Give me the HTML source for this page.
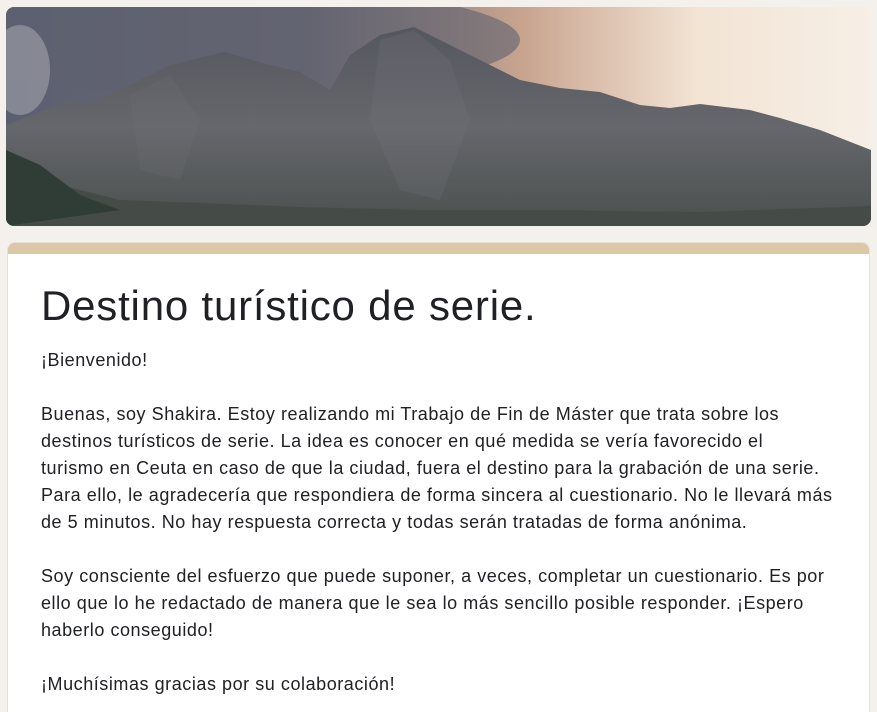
<!DOCTYPE html>
<html><head><meta charset="utf-8"><style>
html,body{margin:0;padding:0;background:#f4f1ec;width:877px;height:712px;overflow:hidden;font-family:"Liberation Sans",Arial,sans-serif;}
.banner{position:absolute;left:6px;top:7px;width:865px;height:219px;border-radius:8px;overflow:hidden;}
.card{position:absolute;left:7px;top:242px;width:863px;height:470px;background:#fff;border-radius:8px 8px 0 0;overflow:hidden;border:1px solid #e6e1d8;border-bottom:none;box-sizing:border-box;}
.bar{height:11px;background:#dcc7a6;}
h1{position:absolute;left:33px;top:39px;margin:0;font-weight:400;font-size:42px;letter-spacing:0.8px;color:#202124;white-space:nowrap;}
.txt{position:absolute;left:33px;top:104px;font-size:18px;letter-spacing:0.55px;line-height:27px;color:#202124;white-space:nowrap;}
</style></head><body>
<div class="banner">
<svg width="865" height="219" viewBox="6 7 865 219">
<defs>
<linearGradient id="sky" x1="0" y1="0" x2="1" y2="0">
<stop offset="0" stop-color="#5a5f70"/><stop offset="0.35" stop-color="#6e6a74"/><stop offset="0.6" stop-color="#c9a590"/><stop offset="0.8" stop-color="#f3e4d4"/><stop offset="1" stop-color="#f6efe6"/>
</linearGradient>
<linearGradient id="m" x1="0" y1="0" x2="0" y2="1">
<stop offset="0" stop-color="#55575f"/><stop offset="0.5" stop-color="#66676c"/><stop offset="1" stop-color="#4a504e"/>
</linearGradient>
</defs>
<rect x="6" y="7" width="865" height="219" fill="url(#sky)"/>
<ellipse cx="220" cy="40" rx="300" ry="55" fill="#5d6070" opacity="0.6"/>
<ellipse cx="20" cy="70" rx="30" ry="45" fill="#e8e6e8" opacity="0.3"/>
<polygon fill="url(#m)" points="6,125 40,112 70,100 85,104 130,85 170,65 224,52 270,65 300,72 330,90 350,55 380,35 414,27 460,50 520,80 560,88 600,92 640,105 670,108 700,104 750,110 780,118 820,130 871,150 871,226 6,226"/>
<polygon fill="#72737a" opacity="0.25" points="380,40 414,30 450,60 470,120 440,200 400,190 370,120"/>
<polygon fill="#72737a" opacity="0.2" points="130,95 170,75 200,120 180,180 140,170"/>
<polygon fill="#454c48" points="6,175 60,185 120,200 200,203 300,207 420,210 560,210 700,212 871,206 871,226 6,226"/>
<polygon fill="#2f3d36" points="6,150 40,165 80,195 120,210 6,226"/>
</svg>
</div>
<div class="card">
<div class="bar"></div>
<h1>Destino turístico de serie.</h1>
<div class="txt">¡Bienvenido!<br><br>Buenas, soy Shakira. Estoy realizando mi Trabajo de Fin de Máster que trata sobre los<br>destinos turísticos de serie. La idea es conocer en qué medida se vería favorecido el<br>turismo en Ceuta en caso de que la ciudad, fuera el destino para la grabación de una serie.<br>Para ello, le agradecería que respondiera de forma sincera al cuestionario. No le llevará más<br>de 5 minutos. No hay respuesta correcta y todas serán tratadas de forma anónima.<br><br>Soy consciente del esfuerzo que puede suponer, a veces, completar un cuestionario. Es por<br>ello que lo he redactado de manera que le sea lo más sencillo posible responder. ¡Espero<br>haberlo conseguido!<br><br>¡Muchísimas gracias por su colaboración!</div>
</div>
</body></html>
